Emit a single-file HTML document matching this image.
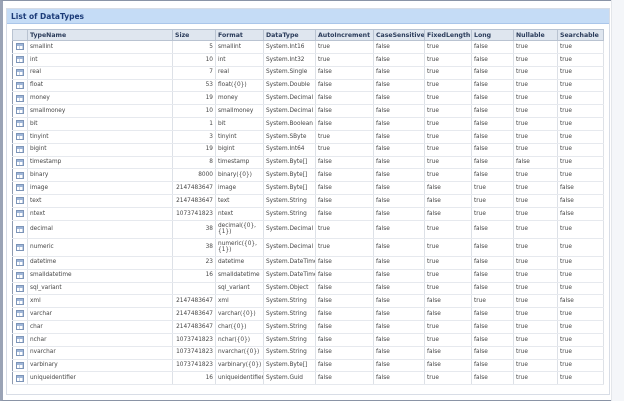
<!DOCTYPE html>
<html><head><style>
html,body{margin:0;padding:0;}
body{width:624px;height:401px;background:#fff;position:relative;overflow:hidden;font-family:"DejaVu Sans",Verdana,sans-serif;}
.win{position:absolute;left:0;top:0;width:620px;height:399px;border:1px solid #8a94a6;border-left:3px solid #9aa3b5;}
.sb{position:absolute;right:0;top:0;width:12px;height:401px;background:#f4f6f9;border-left:1px solid #e3e6ea;}
.panel{position:absolute;left:6px;top:8px;width:602px;height:385px;border:1px solid #d8dde6;background:#fff;}
.hdr{position:absolute;left:0;top:0;width:602px;height:15px;background:#c5dcf6;border-bottom:1px solid #aac6ea;font:bold 7.5px "DejaVu Sans",sans-serif;color:#1b3b78;line-height:15px;padding-left:4px;box-sizing:border-box;}
table{position:absolute;left:12px;top:29px;width:591px;border-collapse:collapse;table-layout:fixed;border:1px solid #8e9bb0;font-size:5.8px;color:#444;}
th{background:#dfe6ef;font:bold 6.2px "DejaVu Sans",sans-serif;color:#2a3b5a;text-align:left;height:10px;padding:0 2px;border:1px solid #b9c3d1;white-space:nowrap;overflow:hidden;}
td{height:11.85px;padding:0 2px;border-bottom:1px solid #e6e9ee;border-right:1px solid #dde1e7;white-space:nowrap;overflow:hidden;line-height:6.5px;}
tr.t td{height:17px;white-space:normal;}
td.n{text-align:right;}
td.i{padding:0;text-align:center;}
.ic{display:inline-block;width:8px;height:7px;border:1px solid #7d95b8;box-sizing:border-box;vertical-align:middle;background-image:linear-gradient(#9fb6d8 0 2px,transparent 2px),repeating-linear-gradient(90deg,transparent 0 2px,#c9d5e6 2px 3px);}
</style></head><body>
<div class="win"></div>
<div class="sb"></div>
<div class="panel"><div class="hdr">List of DataTypes</div></div>
<table>
<colgroup><col style="width:15px"><col style="width:145px"><col style="width:43px"><col style="width:48px"><col style="width:52px"><col style="width:58px"><col style="width:51px"><col style="width:47px"><col style="width:42px"><col style="width:44px"><col style="width:46px"></colgroup>
<tr><th></th><th>TypeName</th><th>Size</th><th>Format</th><th>DataType</th><th>AutoIncrement</th><th>CaseSensitive</th><th>FixedLength</th><th>Long</th><th>Nullable</th><th>Searchable</th></tr>
<tr><td class="i"><span class="ic"></span></td><td>smallint</td><td class="n">5</td><td>smallint</td><td>System.Int16</td><td>true</td><td>false</td><td>true</td><td>false</td><td>true</td><td>true</td></tr>
<tr><td class="i"><span class="ic"></span></td><td>int</td><td class="n">10</td><td>int</td><td>System.Int32</td><td>true</td><td>false</td><td>true</td><td>false</td><td>true</td><td>true</td></tr>
<tr><td class="i"><span class="ic"></span></td><td>real</td><td class="n">7</td><td>real</td><td>System.Single</td><td>false</td><td>false</td><td>true</td><td>false</td><td>true</td><td>true</td></tr>
<tr><td class="i"><span class="ic"></span></td><td>float</td><td class="n">53</td><td>float({0})</td><td>System.Double</td><td>false</td><td>false</td><td>true</td><td>false</td><td>true</td><td>true</td></tr>
<tr><td class="i"><span class="ic"></span></td><td>money</td><td class="n">19</td><td>money</td><td>System.Decimal</td><td>false</td><td>false</td><td>true</td><td>false</td><td>true</td><td>true</td></tr>
<tr><td class="i"><span class="ic"></span></td><td>smallmoney</td><td class="n">10</td><td>smallmoney</td><td>System.Decimal</td><td>false</td><td>false</td><td>true</td><td>false</td><td>true</td><td>true</td></tr>
<tr><td class="i"><span class="ic"></span></td><td>bit</td><td class="n">1</td><td>bit</td><td>System.Boolean</td><td>false</td><td>false</td><td>true</td><td>false</td><td>true</td><td>true</td></tr>
<tr><td class="i"><span class="ic"></span></td><td>tinyint</td><td class="n">3</td><td>tinyint</td><td>System.SByte</td><td>true</td><td>false</td><td>true</td><td>false</td><td>true</td><td>true</td></tr>
<tr><td class="i"><span class="ic"></span></td><td>bigint</td><td class="n">19</td><td>bigint</td><td>System.Int64</td><td>true</td><td>false</td><td>true</td><td>false</td><td>true</td><td>true</td></tr>
<tr><td class="i"><span class="ic"></span></td><td>timestamp</td><td class="n">8</td><td>timestamp</td><td>System.Byte[]</td><td>false</td><td>false</td><td>true</td><td>false</td><td>false</td><td>true</td></tr>
<tr><td class="i"><span class="ic"></span></td><td>binary</td><td class="n">8000</td><td>binary({0})</td><td>System.Byte[]</td><td>false</td><td>false</td><td>true</td><td>false</td><td>true</td><td>true</td></tr>
<tr><td class="i"><span class="ic"></span></td><td>image</td><td class="n">2147483647</td><td>image</td><td>System.Byte[]</td><td>false</td><td>false</td><td>false</td><td>true</td><td>true</td><td>false</td></tr>
<tr><td class="i"><span class="ic"></span></td><td>text</td><td class="n">2147483647</td><td>text</td><td>System.String</td><td>false</td><td>false</td><td>false</td><td>true</td><td>true</td><td>false</td></tr>
<tr><td class="i"><span class="ic"></span></td><td>ntext</td><td class="n">1073741823</td><td>ntext</td><td>System.String</td><td>false</td><td>false</td><td>false</td><td>true</td><td>true</td><td>false</td></tr>
<tr class="t"><td class="i"><span class="ic"></span></td><td>decimal</td><td class="n">38</td><td>decimal({0}, {1})</td><td>System.Decimal</td><td>true</td><td>false</td><td>true</td><td>false</td><td>true</td><td>true</td></tr>
<tr class="t"><td class="i"><span class="ic"></span></td><td>numeric</td><td class="n">38</td><td>numeric({0}, {1})</td><td>System.Decimal</td><td>true</td><td>false</td><td>true</td><td>false</td><td>true</td><td>true</td></tr>
<tr><td class="i"><span class="ic"></span></td><td>datetime</td><td class="n">23</td><td>datetime</td><td>System.DateTime</td><td>false</td><td>false</td><td>true</td><td>false</td><td>true</td><td>true</td></tr>
<tr><td class="i"><span class="ic"></span></td><td>smalldatetime</td><td class="n">16</td><td>smalldatetime</td><td>System.DateTime</td><td>false</td><td>false</td><td>true</td><td>false</td><td>true</td><td>true</td></tr>
<tr><td class="i"><span class="ic"></span></td><td>sql_variant</td><td class="n"></td><td>sql_variant</td><td>System.Object</td><td>false</td><td>false</td><td>true</td><td>false</td><td>true</td><td>true</td></tr>
<tr><td class="i"><span class="ic"></span></td><td>xml</td><td class="n">2147483647</td><td>xml</td><td>System.String</td><td>false</td><td>false</td><td>false</td><td>true</td><td>true</td><td>false</td></tr>
<tr><td class="i"><span class="ic"></span></td><td>varchar</td><td class="n">2147483647</td><td>varchar({0})</td><td>System.String</td><td>false</td><td>false</td><td>false</td><td>false</td><td>true</td><td>true</td></tr>
<tr><td class="i"><span class="ic"></span></td><td>char</td><td class="n">2147483647</td><td>char({0})</td><td>System.String</td><td>false</td><td>false</td><td>true</td><td>false</td><td>true</td><td>true</td></tr>
<tr><td class="i"><span class="ic"></span></td><td>nchar</td><td class="n">1073741823</td><td>nchar({0})</td><td>System.String</td><td>false</td><td>false</td><td>true</td><td>false</td><td>true</td><td>true</td></tr>
<tr><td class="i"><span class="ic"></span></td><td>nvarchar</td><td class="n">1073741823</td><td>nvarchar({0})</td><td>System.String</td><td>false</td><td>false</td><td>false</td><td>false</td><td>true</td><td>true</td></tr>
<tr><td class="i"><span class="ic"></span></td><td>varbinary</td><td class="n">1073741823</td><td>varbinary({0})</td><td>System.Byte[]</td><td>false</td><td>false</td><td>false</td><td>false</td><td>true</td><td>true</td></tr>
<tr><td class="i"><span class="ic"></span></td><td>uniqueidentifier</td><td class="n">16</td><td>uniqueidentifier</td><td>System.Guid</td><td>false</td><td>false</td><td>true</td><td>false</td><td>true</td><td>true</td></tr>
</table>
</body></html>
